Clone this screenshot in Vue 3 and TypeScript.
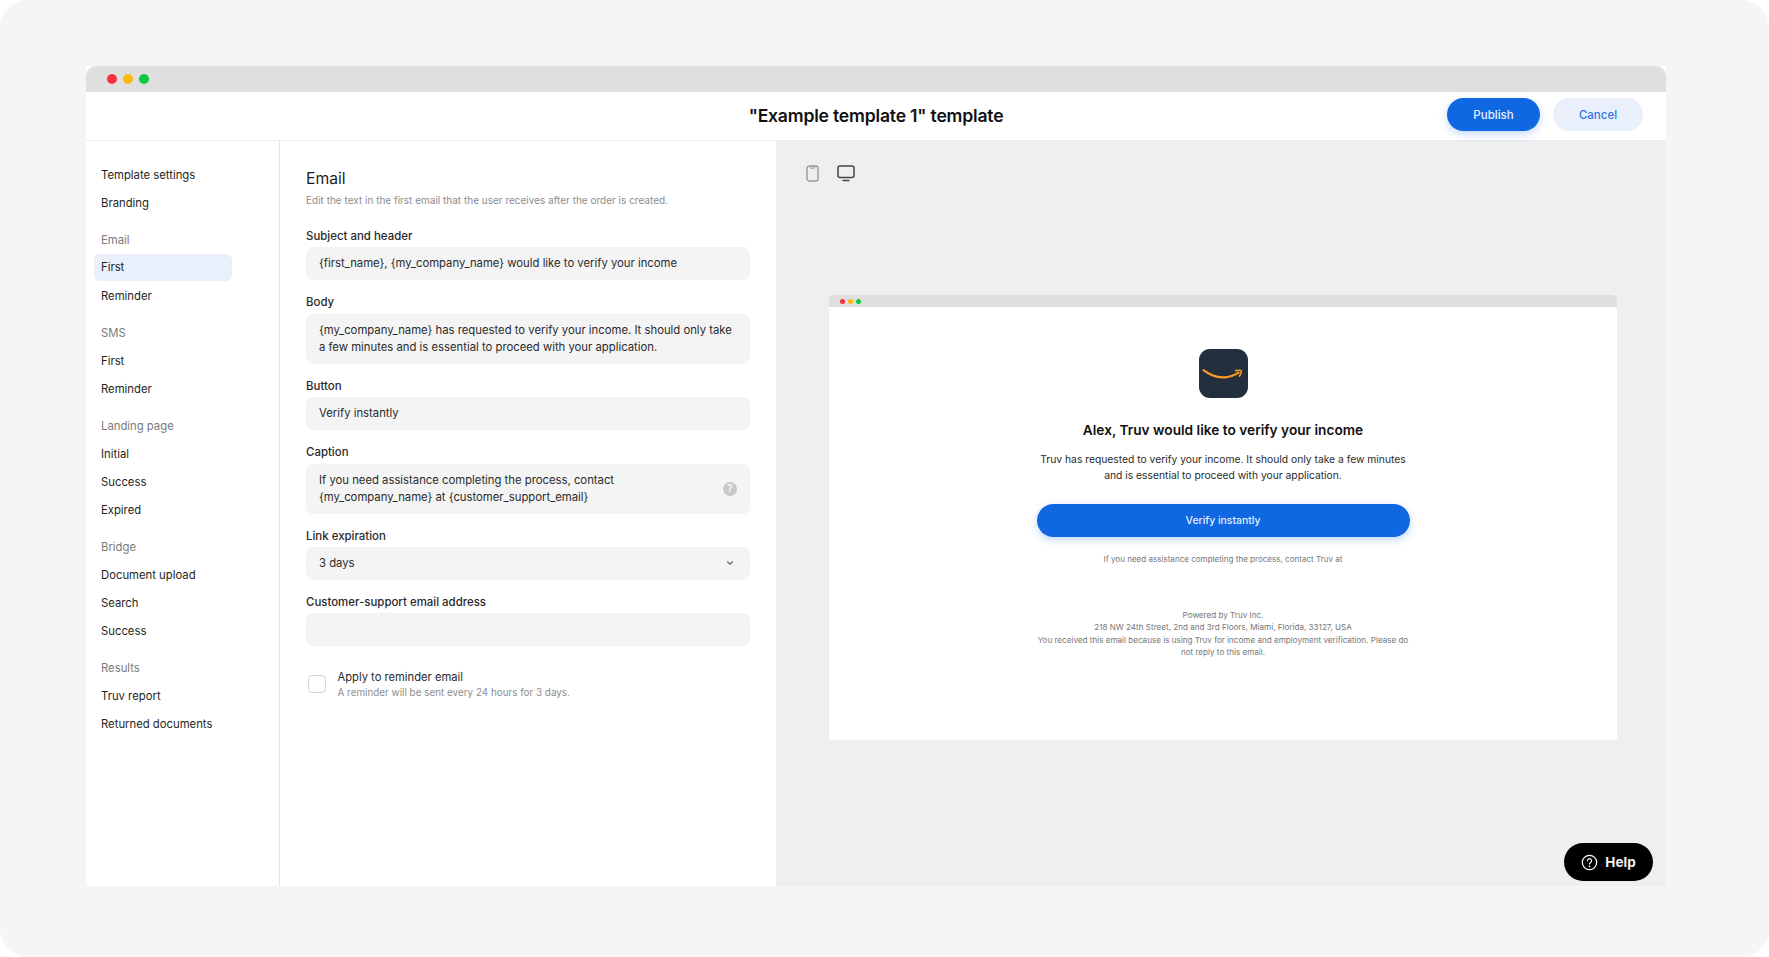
<script setup lang="ts">
interface NavGroup {
  title?: string
  items: string[]
}

const navGroups: NavGroup[] = [
  { items: ['Template settings', 'Branding'] },
  { title: 'Email', items: ['First', 'Reminder'] },
  { title: 'SMS', items: ['First', 'Reminder'] },
  { title: 'Landing page', items: ['Initial', 'Success', 'Expired'] },
  { title: 'Bridge', items: ['Document upload', 'Search', 'Success'] },
  { title: 'Results', items: ['Truv report', 'Returned documents'] }
]
</script>

<template>
  <div class="page">
    <div class="window">
      <div class="titlebar">
        <span class="dot red"></span>
        <span class="dot yellow"></span>
        <span class="dot green"></span>
      </div>

      <header class="header">
        <h1>"Example template 1" template</h1>
        <div class="actions">
          <button type="button" class="btn primary">Publish</button>
          <button type="button" class="btn secondary">Cancel</button>
        </div>
      </header>

      <div class="body">
        <nav class="sidebar">
          <div v-for="(group, g) in navGroups" :key="g" class="nav-group">
            <div v-if="group.title" class="nav-title">{{ group.title }}</div>
            <div
              v-for="(item, i) in group.items"
              :key="item"
              class="nav-item"
              :class="{ active: g === 1 && i === 0 }"
            >
              {{ item }}
            </div>
          </div>
        </nav>

        <section class="form">
          <h2>Email</h2>
          <p class="desc">Edit the text in the first email that the user receives after the order is created.</p>

          <label class="label">Subject and header</label>
          <div class="field">{first_name}, {my_company_name} would like to verify your income</div>

          <label class="label">Body</label>
          <div class="field">{my_company_name} has requested to verify your income. It should only take<br />a few minutes and is essential to proceed with your application.</div>

          <label class="label">Button</label>
          <div class="field">Verify instantly</div>

          <label class="label">Caption</label>
          <div class="field caption">
            <span>If you need assistance completing the process, contact<br />{my_company_name} at {customer_support_email}</span>
            <span class="hint">?</span>
          </div>

          <label class="label">Link expiration</label>
          <div class="field select">
            <span>3 days</span>
            <svg width="8" height="6" viewBox="0 0 8 6" fill="none">
              <path d="M1.5 1.8 4 4.2l2.5-2.4" stroke="#5d6b7a" stroke-width="1.2" stroke-linecap="round" stroke-linejoin="round" />
            </svg>
          </div>

          <label class="label">Customer-support email address</label>
          <div class="field"></div>

          <div class="apply">
            <span class="checkbox"></span>
            <div>
              <div class="apply-title">Apply to reminder email</div>
              <div class="apply-sub">A reminder will be sent every 24 hours for 3 days.</div>
            </div>
          </div>
        </section>

        <section class="preview">
          <div class="devices">
            <svg width="13" height="17" viewBox="0 0 13 17" fill="none">
              <rect x="1" y="1" width="11" height="15" rx="2.2" stroke="#9a9a9a" stroke-width="1.4" />
              <path d="M4.2 1.4h4.6v1a.8.8 0 0 1-.8.8H5a.8.8 0 0 1-.8-.8z" stroke="#9a9a9a" stroke-width="1" />
            </svg>
            <svg width="18" height="17" viewBox="0 0 18 17" fill="none">
              <rect x="1" y="1" width="16" height="11.5" rx="2" stroke="#444" stroke-width="1.5" />
              <path d="M6 15.5h6" stroke="#444" stroke-width="1.5" stroke-linecap="round" />
            </svg>
          </div>

          <div class="mail-window">
            <div class="mail-bar">
              <span class="mini-dot red"></span>
              <span class="mini-dot yellow"></span>
              <span class="mini-dot green"></span>
            </div>
            <div class="mail">
              <svg class="logo" width="49" height="49" viewBox="0 0 49 49">
                <rect width="49" height="49" rx="11" fill="#232f3e" />
                <path d="M4.5 21.2C12 27 20 28.8 26 28.3c5-.4 10-2.2 13.6-4.6" fill="none" stroke="#f79a1e" stroke-width="2.2" stroke-linecap="round" />
                <path d="M36.6 21.6c1.8-.3 5-.6 5.5 0 .5.7-.5 4-1.6 5.6" fill="none" stroke="#f79a1e" stroke-width="1.6" stroke-linecap="round" />
              </svg>
              <h3>Alex, Truv would like to verify your income</h3>
              <p class="mail-text">Truv has requested to verify your income. It should only take a few minutes<br />and is essential to proceed with your application.</p>
              <div class="mail-btn">Verify instantly</div>
              <p class="mail-caption">If you need assistance completing the process, contact Truv at</p>
              <p class="mail-foot">Powered by Truv Inc.<br />218 NW 24th Street, 2nd and 3rd Floors, Miami, Florida, 33127, USA<br />You received this email because is using Truv for income and employment verification. Please do<br />not reply to this email.</p>
            </div>
          </div>
        </section>
      </div>

      <button type="button" class="help">
        <svg width="17" height="17" viewBox="0 0 18 18" fill="none">
          <circle cx="9" cy="9" r="7.6" stroke="#fff" stroke-width="1.3" />
          <path d="M6.8 7.1a2.2 2.2 0 1 1 3.4 1.9c-.8.5-1.2.9-1.2 1.7" stroke="#fff" stroke-width="1.3" stroke-linecap="round" />
          <circle cx="9" cy="13" r=".9" fill="#fff" />
        </svg>
        Help
      </button>
    </div>
  </div>
</template>

<style>
html,
body {
  margin: 0;
  background: #fff;
}
</style>

<style scoped>
.page {
  box-sizing: border-box;
  width: 1769px;
  height: 957px;
  padding: 66px 103px 71px 86px;
  background: #f5f5f5;
  border-radius: 28px;
  font-family: Inter, "Liberation Sans", sans-serif;
  color: #1c1c1e;
  overflow: hidden;
}

.window {
  position: relative;
  display: flex;
  flex-direction: column;
  height: 820px;
  background: #fff;
}

.titlebar {
  display: flex;
  align-items: center;
  gap: 6px;
  height: 26px;
  padding-left: 21px;
  background: #dfdfdf;
  border-radius: 10px 10px 0 0;
}

.dot {
  width: 10px;
  height: 10px;
  border-radius: 50%;
}

.red {
  background: #f5333f;
}

.yellow {
  background: #fbb90c;
}

.green {
  background: #0dc93f;
}

.header {
  position: relative;
  display: flex;
  align-items: center;
  justify-content: center;
  box-sizing: border-box;
  height: 49px;
  padding-bottom: 2px;
  border-bottom: 1px solid #ececec;
}

.header h1 {
  margin: 0;
  font-size: 17.6px;
  font-weight: 600;
  letter-spacing: -0.2px;
  color: #111;
}

.actions {
  position: absolute;
  right: 23px;
  top: 6px;
  display: flex;
  gap: 13px;
}

.btn {
  height: 33px;
  border: none;
  border-radius: 17px;
  font-family: inherit;
  font-size: 11.5px;
  font-weight: 500;
}

.primary {
  width: 93px;
  background: #0f67e2;
  color: #e8f0fd;
  box-shadow: 0 3px 8px rgba(15, 103, 226, 0.25);
}

.secondary {
  width: 90px;
  background: #e9f0fb;
  color: #2f74e6;
}

.body {
  display: flex;
  flex: 1;
  min-height: 0;
}

.sidebar {
  box-sizing: border-box;
  width: 194px;
  flex-shrink: 0;
  padding: 20px 0 0 8px;
  border-right: 1px solid #e4e4e4;
}

.nav-group {
  margin-bottom: 8.4px;
}

.nav-title,
.nav-item {
  box-sizing: border-box;
  width: 138px;
  height: 28.2px;
  padding-left: 7px;
  line-height: 28px;
  font-size: 11.3px;
  color: #1f1f22;
}

.nav-title {
  color: #7a7a7a;
}

.nav-item.active {
  height: 27px;
  margin-bottom: 1.2px;
  line-height: 27px;
  background: #e9f0fb;
  border-radius: 6px;
}

.form {
  box-sizing: border-box;
  width: 496px;
  flex-shrink: 0;
  padding: 28px 26px 0;
}

.form h2 {
  margin: 0;
  font-size: 15.7px;
  line-height: 20px;
  font-weight: 400;
  color: #1c1c1e;
}

.desc {
  margin: 4px 0 21px;
  font-size: 10px;
  line-height: 14px;
  color: #8d8d8d;
}

.label {
  display: block;
  margin-bottom: 3.4px;
  font-size: 11.45px;
  line-height: 16px;
  font-weight: 500;
  color: #2a2a2c;
}

.field {
  box-sizing: border-box;
  min-height: 33px;
  margin-bottom: 14px;
  padding: 8px 13px;
  background: #f4f4f4;
  border-radius: 7px;
  font-size: 11.3px;
  line-height: 17px;
  color: #2a2a2c;
}

.caption,
.select {
  display: flex;
  align-items: center;
  justify-content: space-between;
}

.hint {
  display: flex;
  align-items: center;
  justify-content: center;
  width: 14px;
  height: 14px;
  border-radius: 50%;
  background: #c9c9c9;
  color: #f4f4f4;
  font-size: 10px;
  font-weight: 700;
}

.select svg {
  margin-right: 3px;
}

.apply {
  display: flex;
  align-items: center;
  gap: 11.5px;
  margin: 22.5px 0 0 2px;
}

.checkbox {
  box-sizing: border-box;
  width: 18px;
  height: 18px;
  background: #fff;
  border: 1.5px solid #d4d4d4;
  border-radius: 4px;
}

.apply-title {
  font-size: 11.2px;
  line-height: 16px;
  color: #2a2a2c;
}

.apply-sub {
  font-size: 9.9px;
  line-height: 15px;
  color: #8d8d8d;
}

.preview {
  flex: 1;
  box-sizing: border-box;
  padding: 24px 49px 0 53px;
  background: #efefef;
}

.devices {
  display: flex;
  align-items: center;
  gap: 17.5px;
  height: 17px;
  margin-bottom: 113px;
  margin-left: -23px;
}

.mail-window {
  height: 445px;
  background: #fff;
  display: flex;
  flex-direction: column;
}

.mail-bar {
  display: flex;
  align-items: center;
  gap: 3px;
  height: 12px;
  padding-left: 11px;
  background: #dfdfdf;
  border-radius: 4px 4px 0 0;
}

.mini-dot {
  width: 5px;
  height: 5px;
  border-radius: 50%;
}

.mail {
  display: flex;
  flex-direction: column;
  align-items: center;
  padding-top: 42px;
  text-align: center;
}

.logo {
  display: block;
}

.mail h3 {
  margin: 22px 0 0;
  font-size: 13.7px;
  line-height: 20px;
  font-weight: 600;
  color: #111;
}

.mail-text {
  margin: 11px 0 0;
  font-size: 10.3px;
  line-height: 16px;
  color: #2a2a2c;
}

.mail-btn {
  width: 373px;
  height: 33px;
  margin-top: 21px;
  background: #0f67e2;
  border-radius: 17px;
  color: #e8f0fd;
  font-size: 10.4px;
  font-weight: 500;
  line-height: 33px;
  box-shadow: 0 3px 8px rgba(15, 103, 226, 0.25);
}

.mail-caption {
  margin: 16px 0 0;
  font-size: 8.05px;
  line-height: 12px;
  color: #777;
}

.mail-foot {
  width: 373px;
  margin: 44px 0 0;
  font-size: 8.1px;
  line-height: 12.4px;
  color: #777;
}

.help {
  position: absolute;
  right: 13px;
  bottom: 5px;
  display: flex;
  align-items: center;
  justify-content: center;
  gap: 7px;
  width: 89px;
  height: 38px;
  border: none;
  border-radius: 19px;
  background: #000;
  color: #f2f2f2;
  font-family: inherit;
  font-size: 13.5px;
  font-weight: 700;
}
</style>
